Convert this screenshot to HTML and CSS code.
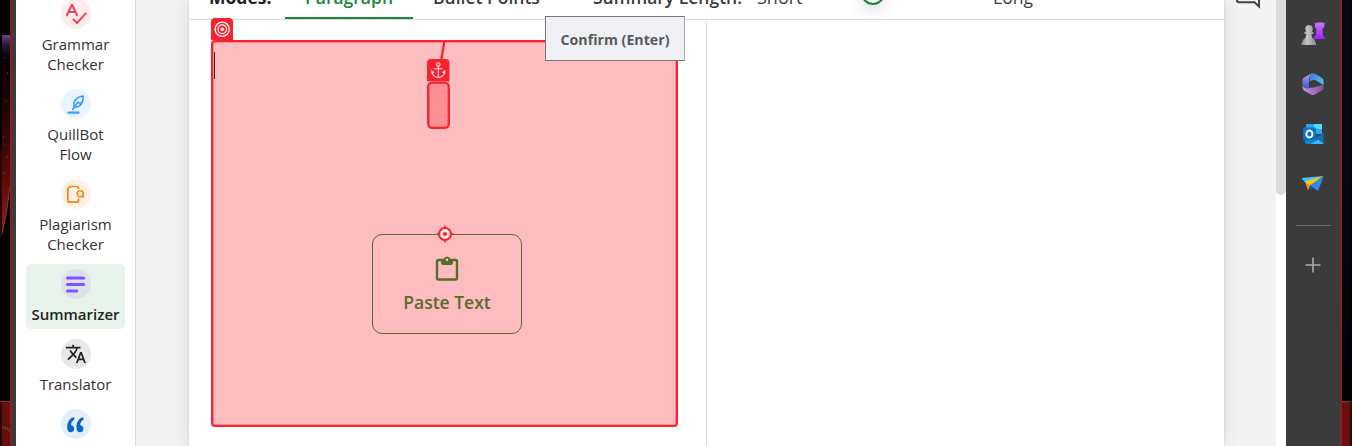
FILE: index.html
```html
<!DOCTYPE html>
<html lang="en">
<head>
<meta charset="utf-8">
<title>Summarizer</title>
<link rel="stylesheet" href="styles.css">
</head>
<body>
<div class="screen">
  <div class="wallpaper wallpaper-left">
    <svg width="10" height="446" viewBox="0 0 10 446">
      <defs>
        <linearGradient id="neb" x1="0" y1="0" x2="0" y2="1"><stop offset="0" stop-color="#6c4585"/><stop offset=".05" stop-color="#2b1535"/><stop offset=".12" stop-color="#050006"/><stop offset=".4" stop-color="#230507"/><stop offset=".7" stop-color="#560b0a"/><stop offset="1" stop-color="#96180f"/></linearGradient>
      </defs>
      <path d="M2 35H10V186Q8 208 2 234Z" fill="url(#neb)"/>
      <path d="M0 150H2V234L0 240Z" fill="#260505"/>
      <path d="M10 186Q8 208 2 234" fill="none" stroke="#8b4a3c" stroke-width=".8"/>
      <path d="M4 58h1M7 73h1M5 101h1M3 137h1M7 157h1M4 173h1" stroke="#8b4b50"/>
      <path d="M0 401H10V446H0Z" fill="#670f0c"/>
      <path d="M0 401H2V446H0Z" fill="#250505"/>
      <path d="M0 401.500H10" stroke="#823631"/>
      <path d="M2 428Q8 427 10 432" fill="none" stroke="#514448" stroke-width="1.500"/>
    </svg>
  </div>
  <div class="frame-left"></div>
  <nav class="sidebar">
    <a class="tool">
      <svg class="tool-icon" viewBox="0 0 30 30"><circle cx="15" cy="15" r="15" fill="#fdebed"/><path d="M5.800 16.500 10.700 6h.6L16.200 16.500M7.600 13h6.900M12.500 20.500l3.500 3.500 8.800-9.600" fill="none" stroke="#f04352" stroke-width="1.900" stroke-linecap="round" stroke-linejoin="round"/></svg>
      <span>Grammar<br>Checker</span>
    </a>
    <a class="tool">
      <svg class="tool-icon" viewBox="0 0 30 30"><circle cx="15" cy="15" r="15" fill="#e8f4ff"/><path d="M7.500 23.700h10" stroke="#3b9cff" stroke-width="2.300" stroke-linecap="round"/><path d="M11.700 20.500 17 13M13.300 18c-2-6 3-10.500 8.900-11 .3 6-2.500 11.500-8.900 11ZM17 13.800l2.500 .2" fill="none" stroke="#3b9cff" stroke-width="1.600" stroke-linecap="round" stroke-linejoin="round"/></svg>
      <span>QuillBot<br>Flow</span>
    </a>
    <a class="tool">
      <svg class="tool-icon" viewBox="0 0 30 30"><circle cx="15" cy="15" r="15" fill="#fff0e5"/><path d="M17.500 10V9.500Q17.500 7.500 15.500 7.500H9L6.800 9.700V21.500Q6.800 23.200 8.500 23.200H15.500Q17.500 23.200 17.500 21.200V19.500" fill="none" stroke="#f5840c" stroke-width="1.700"/><circle cx="19.300" cy="14.700" r="3" fill="none" stroke="#f5840c" stroke-width="1.600"/><path d="m21.200 17 1.500 1.700" stroke="#f5840c" stroke-width="1.600"/></svg>
      <span>Plagiarism<br>Checker</span>
    </a>
    <a class="tool tool-active">
      <svg class="tool-icon" viewBox="0 0 30 30"><circle cx="15" cy="15" r="15" fill="#dde0ed"/><path d="M6.600 9h16M6.600 15.500h16M6.600 22h9" stroke="#8052ff" stroke-width="3.200" stroke-linecap="round"/></svg>
      <span>Summarizer</span>
    </a>
    <a class="tool">
      <svg class="tool-icon" viewBox="0 0 30 30"><circle cx="15" cy="15" r="15" fill="#e8e8e8"/><g transform="translate(4 4) scale(.91)"><path d="m12.870 15.070-2.540-2.510.03-.03c1.740-1.940 2.980-4.170 3.710-6.530H17V4h-7V2H8v2H1v1.990h11.170C11.500 7.920 10.440 9.750 9 11.350 8.070 10.320 7.300 9.190 6.690 8h-2c.73 1.630 1.730 3.170 2.980 4.560l-5.090 5.020L4 19l5-5 3.110 3.110.76-2.040zM18.500 10h-2L12 22h2l1.120-3h4.750L21 22h2l-4.500-12zm-2.620 7 1.620-4.330L19.120 17h-3.240z" fill="#222"/></g></svg>
      <span>Translator</span>
    </a>
    <a class="tool">
      <svg class="tool-icon" viewBox="0 0 30 30"><circle cx="15" cy="15" r="15" fill="#e3f0fb"/><path d="M13.300 8.300C9.500 8.500 6.200 12.500 6.200 18.500c0 3 1.400 4.700 3.500 4.700s3.500-1.500 3.500-3.500-1.400-3.400-3.200-3.400c.2-2.800 1.200-4.500 3.300-5.500zM22.500 8.300c-3.800.2-7.100 4.200-7.100 10.200 0 3 1.400 4.700 3.500 4.700s3.500-1.500 3.500-3.500-1.400-3.400-3.200-3.400c.2-2.800 1.200-4.500 3.300-5.500z" fill="#0867c6"/></svg>
    </a>
  </nav>
  <main class="page">
    <section class="card">
      <header class="modes">
        <span class="modes-label">Modes:</span>
        <span class="tab tab-active">Paragraph</span>
        <span class="tab-plain">Bullet Points</span>
        <span class="length-label">Summary Length:</span>
        <span class="short">Short</span>
        <span class="slider"><i class="knob"></i></span>
        <span class="long">Long</span>
      </header>
      <div class="panes">
        <div class="input-pane">
          <div class="target-area">
            <i class="caret"></i>
            <button class="paste">
              <svg width="24" height="26" viewBox="0 0 24 26"><path d="M3.500 4H20.500Q22 4 22 5.500V22Q22 23.500 20.500 23.500H3.500Q2 23.500 2 22V5.500Q2 4 3.500 4Z" fill="none" stroke="#596c2e" stroke-width="2.400"/><path d="M6 3h2.700a3.400 3.400 0 0 1 6.600 0h2.700v3.500q0 2.500-2.500 2.500h-7Q6 9 6 6.500Z" fill="#596c2e"/><circle cx="12" cy="3.700" r="1.200" fill="#fdbcbf"/></svg>
              <span>Paste Text</span>
            </button>
            <svg class="target-badge" width="22" height="22" viewBox="0 0 22 22"><path d="M0 22V4Q0 0 4 0H18Q22 0 22 4V22Z" fill="#f9222f"/><g fill="none" stroke="#fff"><circle cx="11.200" cy="11.200" r="7.100" stroke-width="1.300"/><circle cx="11.200" cy="11.200" r="4.300" stroke-width="1.200"/></g><circle cx="11.200" cy="11.200" r="1.700" fill="#fff"/></svg>
            <svg class="anchor" width="24" height="90" viewBox="0 0 24 90"><path d="M18.500 0 15 20" stroke="#f9222f" stroke-width="2.300"/><rect x="2.200" y="41.700" width="20.600" height="45.100" rx="4" fill="#fb8f94" stroke="#f9222f" stroke-width="2.300"/><path d="M1 40.300V22Q1 18 5 18H19.500Q23.500 18 23.500 22V40.300Z" fill="#f9222f"/><g fill="none" stroke="#ffdfe0" stroke-width="1.100"><circle cx="12.300" cy="23.500" r="1.700"/><path d="M12.300 25.500V36.500M8 27.800H16.600M6 30.500Q6.700 36.400 12.300 36.400T18.600 30.500M5.800 32.500V30L8 31.500M18.800 32.500V30L16.600 31.500"/></g></svg>
            <svg class="crosshair" width="18" height="18" viewBox="0 0 18 18"><circle cx="9" cy="9" r="6" fill="#ffe4e5" stroke="#f9222f" stroke-width="2"/><path d="M9 .5V4M9 14V17.500M.5 9H4M14 9H17.500" stroke="#f9222f" stroke-width="1.500"/><circle cx="9" cy="9" r="2" fill="#f9222f"/></svg>
          </div>
        </div>
        <div class="output-pane"></div>
      </div>
      <div class="tooltip">Confirm (Enter)</div>
    </section>
    <aside class="feedback"><svg width="28" height="10" viewBox="0 0 28 10"><path d="M2 0Q2 2.300 4 2.300H19.500L24 6.500V0" fill="none" stroke="#444" stroke-width="2"/></svg></aside>
  </main>
  <div class="scroll-track"><div class="scroll-thumb"></div></div>
  <aside class="edge-bar">
    <svg class="edge-icon" viewBox="0 0 24 24">
      <defs><linearGradient id="pawn" x2="1"><stop stop-color="#858585"/><stop offset=".4" stop-color="#c5c5c5"/><stop offset="1" stop-color="#888"/></linearGradient><linearGradient id="rook" x2="0" y2="1"><stop stop-color="#c979f5"/><stop offset="1" stop-color="#a41dff"/></linearGradient></defs>
      <path d="M14 .5l2 .7.5-1h2l.4 1 .5-1h2l.4 1 2-.7-.7 5-1.700 1 .5 7 2 2.500V17H12.500V15.500l2.500-2.500.5-6.500-1.700-1Z" fill="url(#rook)"/>
      <path d="M8 3a4 4 0 0 1 3 6.500l2 1.300-.5 1-2 .4q.2 4 3 5.500.7 1 .5 2l1 .8V23H.5V20.500l1-.8q-.2-1 .7-2 2.800-1.500 3.200-5.500l-2-.4-.5-1L5 9.500A4 4 0 0 1 8 3Z" fill="url(#pawn)"/>
    </svg>
    <svg class="edge-icon" viewBox="0 0 24 24">
      <defs><linearGradient id="m1" x2="1" y2="1"><stop stop-color="#426fde"/><stop offset="1" stop-color="#45d3f5"/></linearGradient><linearGradient id="m2" x2="0" y2="1"><stop stop-color="#bc9bf5"/><stop offset="1" stop-color="#3453bb"/></linearGradient><linearGradient id="m3" x2="1"><stop stop-color="#cc92e6"/><stop offset="1" stop-color="#78519b"/></linearGradient></defs>
      <path d="M9.500 2Q12 .3 14.500 2L21 6Q22.500 7 22.500 9V13L16 9Q12 6.500 8.500 10Z" fill="url(#m1)"/>
      <path d="M10.500 1.500Q8 4 8 9V17Q5 18 1.500 15V8Q1.500 6.500 3 5.500Z" fill="url(#m2)"/>
      <path d="M1.500 14.500Q5 17.500 8.500 16L16 14.500 22.500 12.500V16Q22.500 17.500 21 18.500L14 22.500Q12 23.700 10 22.500L3 18.500Q1.500 17 1.500 14.500Z" fill="url(#m3)"/>
      <circle cx="12" cy="12" r="3.600" fill="#3b3b3b"/>
    </svg>
    <svg class="edge-icon" viewBox="0 0 24 24">
      <path d="M5 2.500Q5 2 6 2H20Q21 2 21 3V11H5Z" fill="#2aa8ea"/><path d="M13 2H21V7H13Z" fill="#50d9ff"/><path d="M5 7H13V12H5Z" fill="#0665b6"/><path d="M13 7H21V12H13Z" fill="#28a9eb"/><path d="M4 11L22.500 21V22H6Q4 22 4 20Z" fill="#1385cf"/><path d="M22.500 11V21L14 16Z" fill="#1270ad"/><path d="M10 22 17 17.500 22.500 21.500 22 22Z" fill="#35b8f1"/><rect x="2" y="5.500" width="13" height="13" rx="1.200" fill="#0872c9"/><ellipse cx="8.400" cy="12" rx="3.100" ry="3.500" fill="none" stroke="#fff" stroke-width="1.900"/>
    </svg>
    <svg class="edge-icon" viewBox="0 0 24 24">
      <path d="M.5 6 22.500 4 4.500 11Z" fill="#43c8f5"/><path d="M22.500 4.500 17 19 9 13.500Z" fill="#3188ef"/><path d="M22.500 4 9 13.500 7 18 4.500 9.500Z" fill="#ffc414"/><path d="M4.500 11 9 12.500 7 18Z" fill="#ed9517"/><path d="M9 12.500V18L12 15.500Z" fill="#1759b9"/>
    </svg>
    <hr>
    <svg class="edge-plus" width="16" height="16" viewBox="0 0 16 16"><path d="M8 .5V15.500M.5 8H15.500" stroke="#aaa" stroke-width="1.600"/></svg>
  </aside>
  <div class="wallpaper wallpaper-right"></div>
</div>
</body>
</html>
```
FILE: styles.css
```css
* { box-sizing: border-box; }
body { margin: 0; overflow: hidden; font-family: "Open Sans", "Noto Sans", sans-serif; color: #333; }
.screen { display: grid; grid-template-columns: 10px 6px 120px 1140px 10px 55px 11px; width: 1352px; height: 446px; overflow: hidden; background: #fff; }
.wallpaper { background: #000; overflow: hidden; }
.wallpaper svg { display: block; }
.wallpaper-right { border-left: 1px solid #c50b12; background: linear-gradient(90deg, transparent 8px, #00000099 8px), linear-gradient(#090713 0 160px, #020108 401px, #713e38 401px 402px, #6b100c 402px); }
.frame-left { border-left: 1px solid #d5000d; background: #3b3b3b; }

.sidebar { display: flex; flex-direction: column; align-items: center; height: 446px; overflow: hidden; border-right: 1px solid #dadada; background: #fff; }
.tool { display: flex; flex-direction: column; align-items: center; flex: none; width: 99px; padding: 5px 0; font-size: 15px; line-height: 20px; text-align: center; white-space: nowrap; }
.tool:first-child { margin-top: -6px; }
.tool span { padding-top: 5px; padding-bottom: 5px; }
.tool-icon { display: block; width: 30px; height: 30px; flex: none; }
.tool-active { height: 65px; margin-bottom: 5px; border-radius: 5px; background: #e7f3eb; color: #222; font-weight: 600; }

.page { display: grid; grid-template-columns: 53px 1035px 52px; background: #f3f3f3; min-width: 0; }
.card { grid-column: 2; position: relative; display: flex; flex-direction: column; height: 446px; background: #fff; box-shadow: 0 0 20px #00000018, 0 0 3px #00000020; clip-path: inset(0 -30px); }
.modes { display: flex; align-items: flex-end; height: 20px; flex: none; border-bottom: 1px solid #d9d9d9; font-size: 17.500px; font-weight: 600; line-height: 18px; color: #3b3b3b; white-space: nowrap; }
.modes > span { flex: none; height: 31px; }
.modes-label { width: 76px; margin-left: 20px; font-weight: 700; color: #222; }
.modes > .tab-active { width: 128px; border-bottom: 2px solid #198639; text-align: center; color: #198639; }
.tab-plain { width: 160px; margin-left: 20px; }
.length-label { width: 164px; }
.short { width: 105px; font-weight: 400; font-size: 18px; }
.slider { width: 131px; }
.knob { display: block; width: 24px; height: 24px; margin-top: -7px; margin-left: -1px; border: 2px solid #198639; border-radius: 50%; background: #fff; box-shadow: 0 6px 16px #00000020; }
.long { font-weight: 400; }

.panes { display: grid; grid-template-columns: 518px 1fr; flex: 1; }
.input-pane { padding: 20px 28px 0 22px; border-right: 1px solid #dcdcdc; }
.target-area { position: relative; display: flex; width: 467px; height: 387px; padding: 191.500px 0 0 159px; border: 2px solid #f9222f; border-radius: 4px; background: #fdbcbf; box-shadow: inset 0 0 0 1px #fb8a90; }
.caret { position: absolute; left: 1px; top: 10px; width: 1px; height: 27px; background: #321; }
.paste { display: flex; flex-direction: column; align-items: center; width: 150px; height: 100px; padding: 21px 0 0; border: 1px solid #596c2e; border-radius: 10px; background: transparent; color: #596c2e; font: 600 17.500px/24px "Open Sans", sans-serif; }
.paste svg { flex: none; display: block; }
.paste span { padding-top: 8px; white-space: nowrap; }
.target-badge { position: absolute; left: -2px; top: -24px; }
.anchor { position: absolute; left: 213px; top: -1px; }
.crosshair { position: absolute; left: 222.500px; top: 183px; }
.tooltip { position: absolute; left: 356px; top: 16px; width: 140px; height: 45px; border: 1px solid #777; border-right-color: #aaa; background: #f0f1f7; color: #595959; font-size: 14.200px; font-weight: 700; line-height: 45px; text-align: center; white-space: nowrap; }
.feedback { padding-left: 11px; }
.feedback svg { display: block; }

.scroll-track { background: #fff; }
.scroll-thumb { height: 195px; border-radius: 0 0 5px 5px; background: #dadada; }
.edge-bar { display: flex; flex-direction: column; align-items: center; padding: 22px 1px 0 0; gap: 26px; background: #3b3b3b; }
.edge-icon { display: block; width: 24px; height: 24px; flex: none; }
.edge-bar hr { width: 35px; height: 1px; margin: 3px 0 0; border: 0; background: #6b6b6b; flex: none; }
.edge-plus { margin-top: 5px; flex: none; }
```
